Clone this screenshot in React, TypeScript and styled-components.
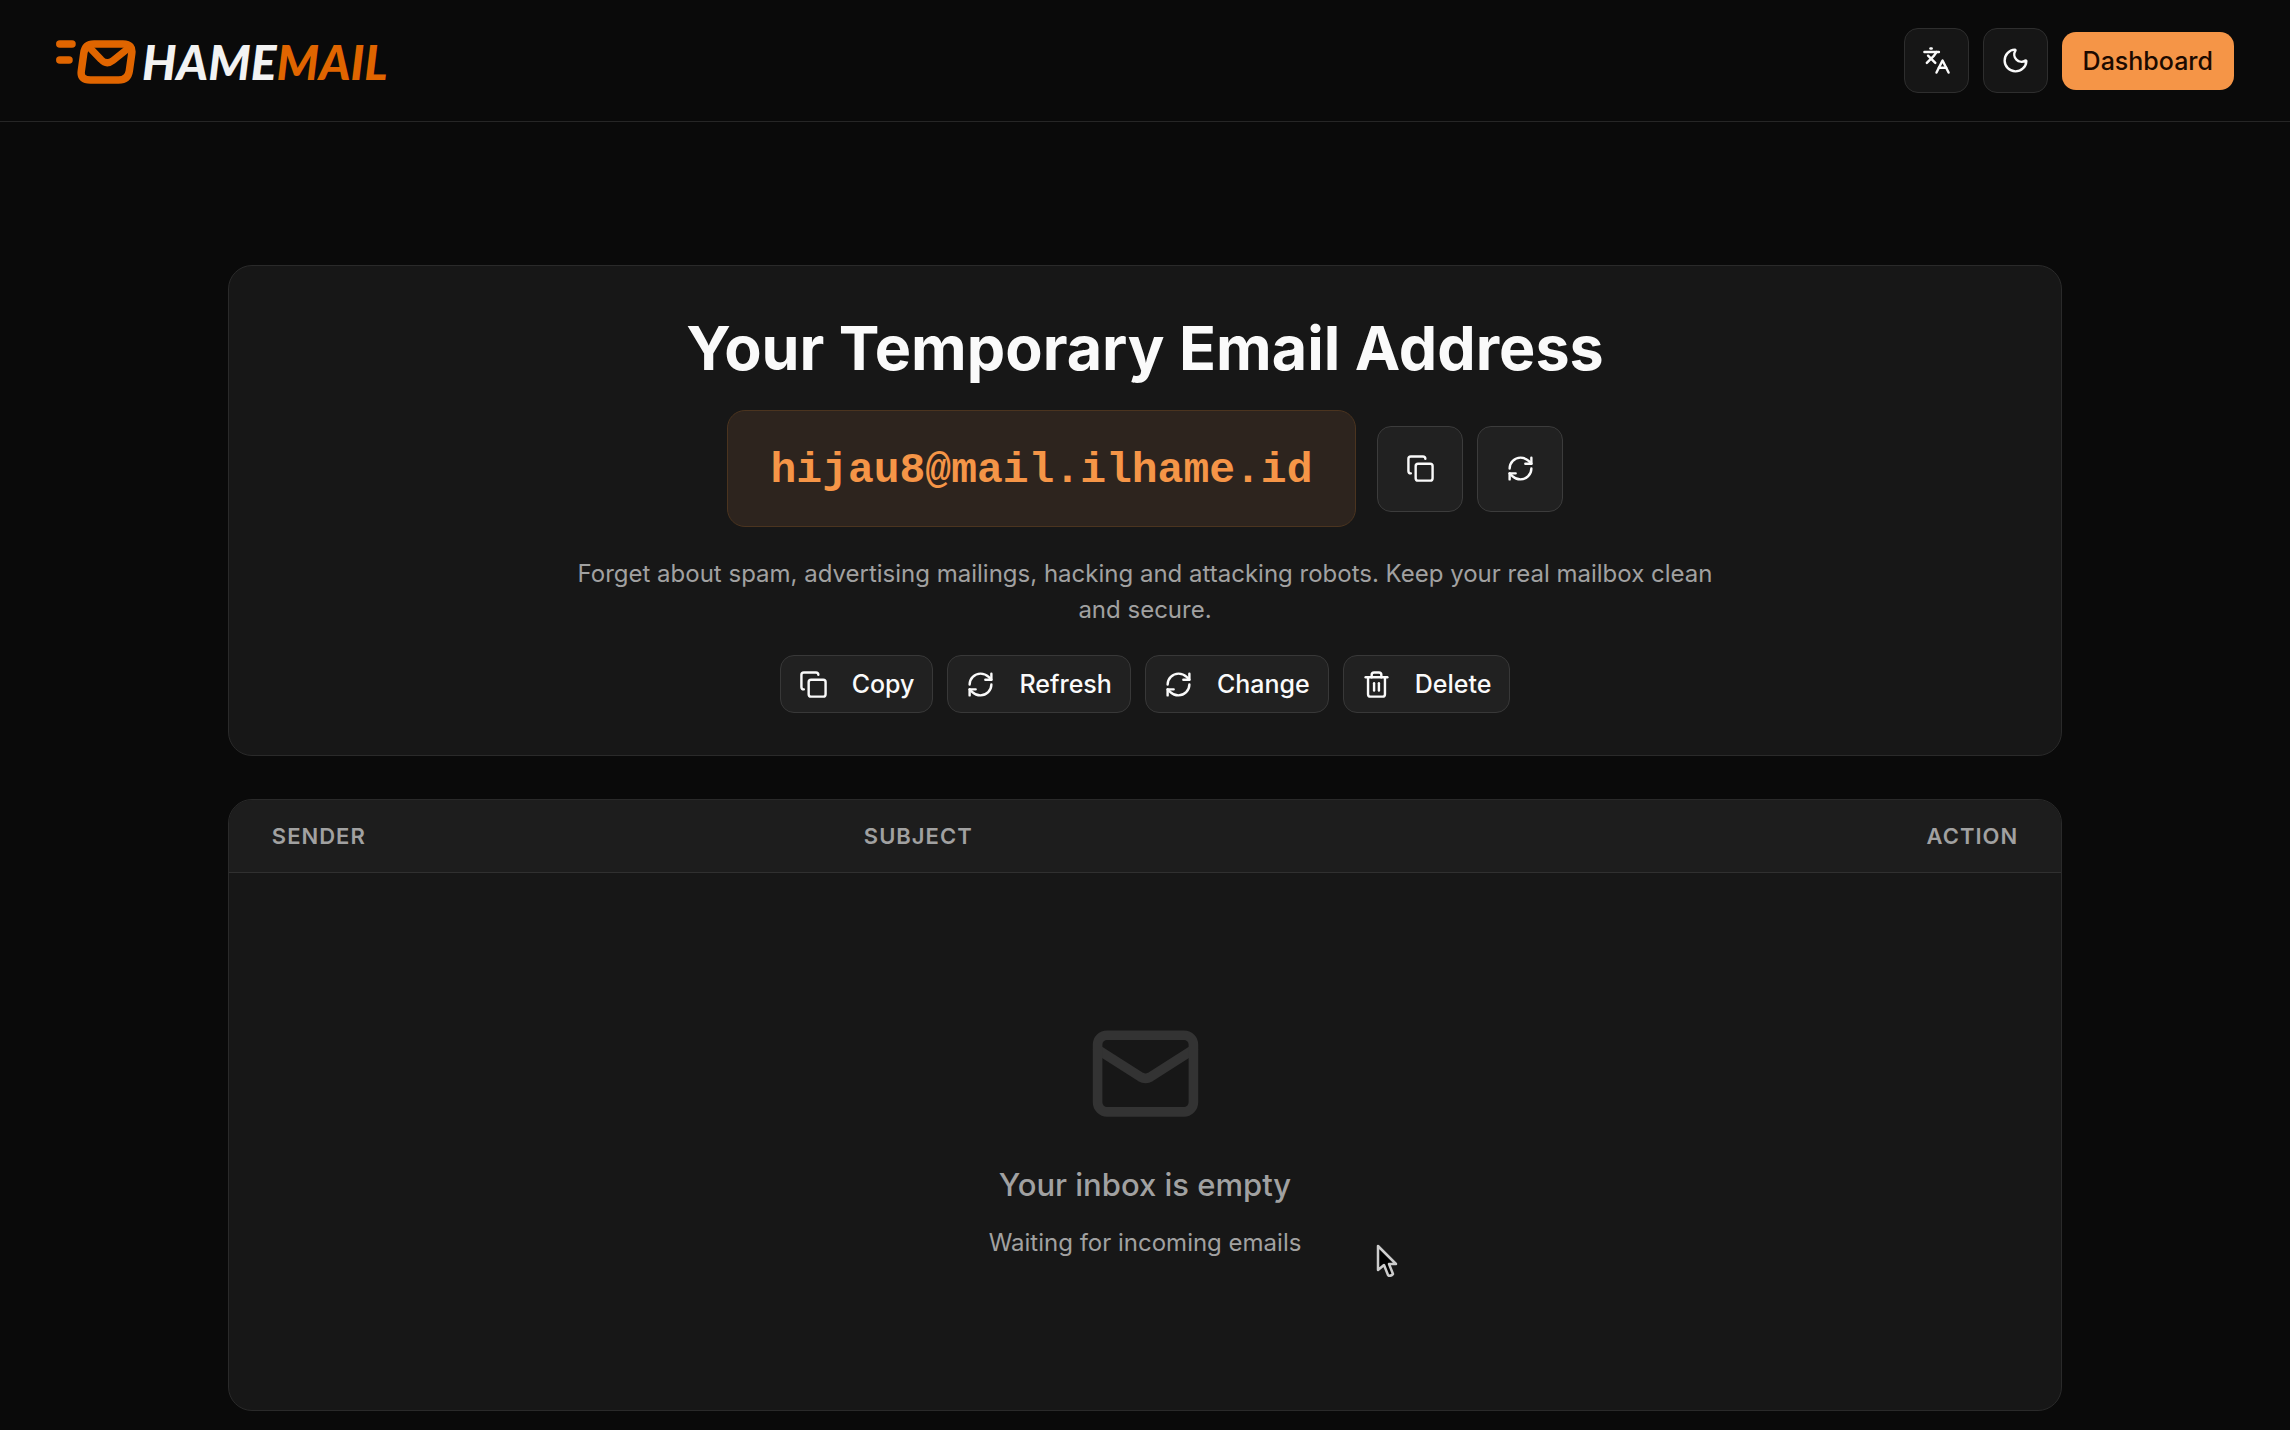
import React from "react";
import styled, { createGlobalStyle } from "styled-components";
import { Copy, Languages, Moon, RefreshCw, Trash2, Mail } from "lucide-react";

const Global = createGlobalStyle`
  * { box-sizing: border-box; }
  body { margin: 0; background: #0a0a0a; color: #fafafa; font-family: Inter, "Liberation Sans", sans-serif; }
  h1, h2, p { margin: 0; }
  button { font: inherit; color: inherit; cursor: pointer; }
`;

const Header = styled.header`
  display: flex; align-items: center; justify-content: space-between;
  height: 122px; padding: 0 56px; border-bottom: 1px solid #262626;
`;
const Brand = styled.a`
  display: flex; align-items: center; gap: 6px; padding-top: 3px;
  color: #f2f2f2; text-decoration: none;
`;
const Wordmark = styled.span`
  font: italic 900 48px/56px Lato, sans-serif;
  b { font-weight: inherit; color: #e06500; }
`;
const Actions = styled.div`
  display: flex; align-items: center; gap: 14px;
`;
const IconButton = styled.button<{ $size: number; $raised?: boolean }>`
  display: grid; place-items: center; padding: 0;
  width: ${(p) => p.$size}px; height: ${(p) => p.$size}px;
  border: 1px solid ${(p) => (p.$raised ? "#3c3c3c" : "#2e2e2e")}; border-radius: 14px;
  background: ${(p) => (p.$raised ? "#212121" : "#161616")};
`;
const Primary = styled.button`
  height: 58px; padding: 0 21px; border: 0; border-radius: 14px;
  background: #f59547; font-size: 25px; font-weight: 500; line-height: 36px;
  && { color: #1c0a00; }
`;
const Main = styled.main`
  display: flex; flex-direction: column; gap: 43px;
  width: 80.1%; margin: 0 auto; padding: 143px 0 18px;
`;
const Card = styled.section`
  overflow: hidden; border: 1px solid #2a2a2a; border-radius: 24px; background: #171717;
`;
const Hero = styled(Card)`
  display: flex; flex-direction: column; align-items: center; padding: 42px;
`;
const Title = styled.h1`
  font-size: 61px; line-height: 80px; font-weight: 700; text-align: center;
`;
const AddressRow = styled.div`
  display: flex; align-items: center; gap: 14px; margin-top: 22px;
`;
const Address = styled.div`
  padding: 32px 43px 27px; margin-right: 7px; border: 1px solid #4b341f; border-radius: 18px;
  background: #2d241e; color: #f59547;
  font: 700 43px/56px "Liberation Mono", monospace;
`;
const Lead = styled.p`
  max-width: 1160px; margin-top: 29px; color: #a1a1a1;
  font-size: 24px; line-height: 36px; text-align: center;
`;
const Tools = styled.div`
  display: flex; gap: 14px; margin-top: 27px;
`;
const Tool = styled.button`
  display: flex; align-items: center; gap: 24px; height: 58px; padding: 0 18px;
  border: 1px solid #383838; border-radius: 14px; background: #212121;
  font-size: 25px; font-weight: 500; line-height: 36px;
`;
const Table = styled.table`
  width: 100%; border-collapse: collapse; table-layout: fixed;
`;
const Th = styled.th<{ $width?: string; $end?: boolean }>`
  width: ${(p) => p.$width ?? "auto"}; height: 72px; padding: 0 43px;
  border-bottom: 1px solid #303030; background: #1d1d1d; color: #a1a1a1;
  font-size: 22px; font-weight: 600; line-height: 28px; letter-spacing: 1px;
  text-align: ${(p) => (p.$end ? "right" : "left")}; text-transform: uppercase;
`;
const EmptyCell = styled.td`
  padding: 143px 43px 149px; color: #a1a1a1; text-align: center;
`;
const EmptyIcon = styled(Mail)`
  display: block; margin: 0 auto 31px; color: #333333;
`;
const EmptyTitle = styled.h2`
  font-size: 31px; line-height: 46px; font-weight: 500;
`;
const EmptyText = styled.p`
  && { margin-top: 17px; }
  font-size: 24px; line-height: 36px;
`;
const Pointer = styled.svg`
  position: fixed; left: 60.1%; top: 1243px; pointer-events: none;
`;

function Logo() {
  return (
    <svg width="80" height="44" viewBox="0 0 80 44" fill="none" stroke="#e06500" strokeWidth="7.5" strokeLinecap="round" strokeLinejoin="round" aria-hidden="true">
      <path d="M3.800 4H16M3.800 20H13" />
      <path d="M38 3.900H67Q77.300 4 75.700 14L73.300 31Q72 40 62.500 40H34.500Q24 40 25.300 31L27.800 13Q29 3.900 38 3.900Z" />
      <path d="M33 7L45 19.500Q50.500 25.500 57 20.500L72 8.500" strokeWidth="7" />
    </svg>
  );
}

const tools = [
  { label: "Copy", Icon: Copy },
  { label: "Refresh", Icon: RefreshCw },
  { label: "Change", Icon: RefreshCw },
  { label: "Delete", Icon: Trash2 },
];

export default function App() {
  return (
    <>
      <Global />
      <Header>
        <Brand href="#">
          <Logo />
          <Wordmark>HAME<b>MAIL</b></Wordmark>
        </Brand>
        <Actions>
          <IconButton $size={65} aria-label="Language"><Languages size={29} /></IconButton>
          <IconButton $size={65} aria-label="Theme"><Moon size={29} /></IconButton>
          <Primary>Dashboard</Primary>
        </Actions>
      </Header>
      <Main>
        <Hero>
          <Title>Your Temporary Email Address</Title>
          <AddressRow>
            <Address>hijau8@mail.ilhame.id</Address>
            <IconButton $size={86} $raised aria-label="Copy address"><Copy size={29} /></IconButton>
            <IconButton $size={86} $raised aria-label="Refresh inbox"><RefreshCw size={29} /></IconButton>
          </AddressRow>
          <Lead>Forget about spam, advertising mailings, hacking and attacking robots. Keep your real mailbox clean and secure.</Lead>
          <Tools>
            {tools.map(({ label, Icon }) => (
              <Tool key={label}><Icon size={29} />{label}</Tool>
            ))}
          </Tools>
        </Hero>
        <Card>
          <Table>
            <thead>
              <tr>
                <Th $width="592px">Sender</Th>
                <Th>Subject</Th>
                <Th $width="300px" $end>Action</Th>
              </tr>
            </thead>
            <tbody>
              <tr>
                <EmptyCell colSpan={3}>
                  <EmptyIcon size={115} />
                  <EmptyTitle>Your inbox is empty</EmptyTitle>
                  <EmptyText>Waiting for incoming emails</EmptyText>
                </EmptyCell>
              </tr>
            </tbody>
          </Table>
        </Card>
      </Main>
      <Pointer width="24" height="36" viewBox="0 0 24 36" aria-hidden="true">
        <path d="M2 3V27L8 22L12 32Q14 34 17 31L13 21H20Z" fill="#000" stroke="#ccc" strokeWidth="2.500" strokeLinejoin="round" />
      </Pointer>
    </>
  );
}
